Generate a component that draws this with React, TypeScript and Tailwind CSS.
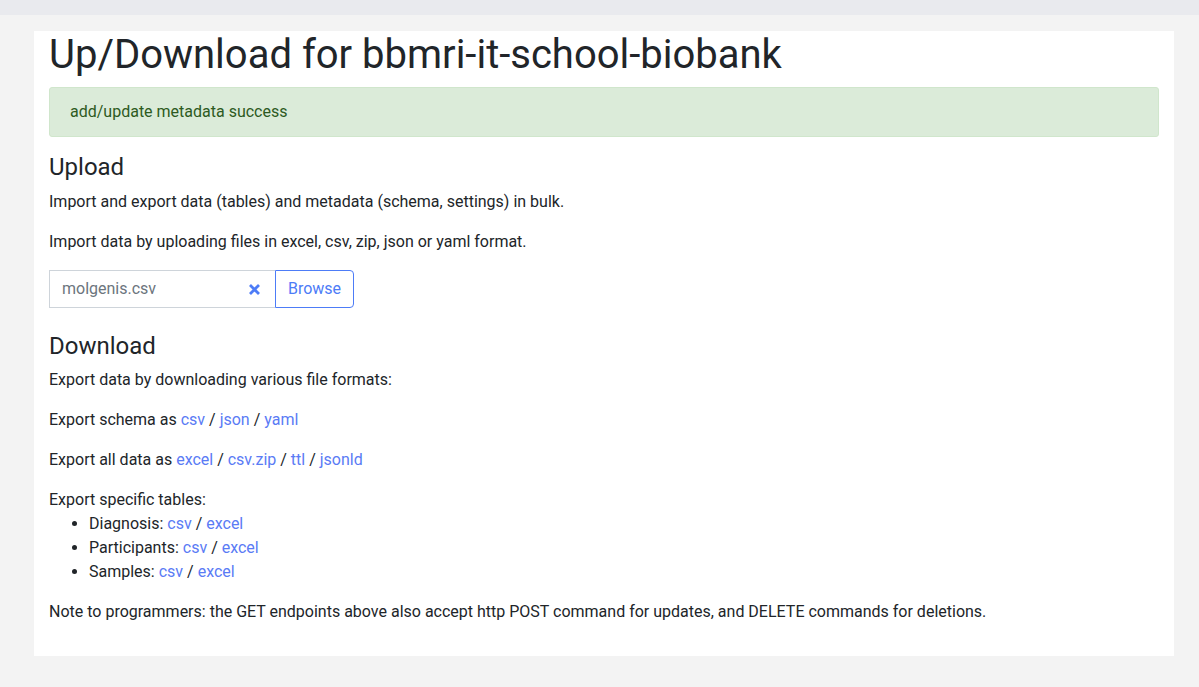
import React from "react";

const A = ({ children }: { children: React.ReactNode }) => (
  <a href="#" className="text-[#5a7bf5]">{children}</a>
);

export default function App() {
  return (
    <div className="min-h-[687px] bg-[#f3f3f3] text-[#212529] text-[16px] leading-[24px]" style={{ fontFamily: "Roboto, 'Liberation Sans', sans-serif" }}>
      <div className="h-[15px] bg-[#e9eaee]" />
      <div className="pt-[16px] px-[34px] pr-[25px]">
        <div className="bg-white px-[15px] pt-0 pb-[16px]">
          <h1 className="text-[40px] leading-[48px] font-normal mb-[8px]">Up/Download for bbmri-it-school-biobank</h1>
          <div className="bg-[#dbebd9] border border-[#d0e6cc] rounded-[3px] px-[20px] py-[12px] text-[#2d5a22] mb-[16px]">
            add/update metadata success
          </div>
          <h4 className="text-[24px] leading-[29px] mb-[8px]">Upload</h4>
          <p className="mb-[16px]">Import and export data (tables) and metadata (schema, settings) in bulk.</p>
          <p className="mb-[16px]">Import data by uploading files in excel, csv, zip, json or yaml format.</p>
          <div className="flex mb-[24px]">
            <div className="w-[226px] h-[38px] border border-[#ced4da] border-r-0 flex items-center justify-between pl-[12px] pr-[14px] text-[#6c757d]">
              <span>molgenis.csv</span>
              <svg width="13" height="13" viewBox="0 0 13 13">
                <path d="M2 2L11 11M11 2L2 11" stroke="#4d7cf7" strokeWidth="2.8" strokeLinecap="butt" />
              </svg>
            </div>
            <button className="h-[38px] w-[79px] border border-[#4d7cf7] rounded-r-[4px] text-[#4d7cf7] text-[16px]">Browse</button>
          </div>
          <h4 className="text-[24px] leading-[29px] mb-[7px]">Download</h4>
          <p className="mb-[16px]">Export data by downloading various file formats:</p>
          <p className="mb-[16px]">Export schema as <A>csv</A> / <A>json</A> / <A>yaml</A></p>
          <p className="mb-[16px]">Export all data as <A>excel</A> / <A>csv.zip</A> / <A>ttl</A> / <A>jsonld</A></p>
          <p className="mb-0">Export specific tables:</p>
          <ul className="list-disc pl-[40px] mb-[16px]">
            <li>Diagnosis: <A>csv</A> / <A>excel</A></li>
            <li>Participants: <A>csv</A> / <A>excel</A></li>
            <li>Samples: <A>csv</A> / <A>excel</A></li>
          </ul>
          <p className="mb-[16px]">Note to programmers: the GET endpoints above also accept http POST command for updates, and DELETE commands for deletions.</p>
        </div>
      </div>
    </div>
  );
}
